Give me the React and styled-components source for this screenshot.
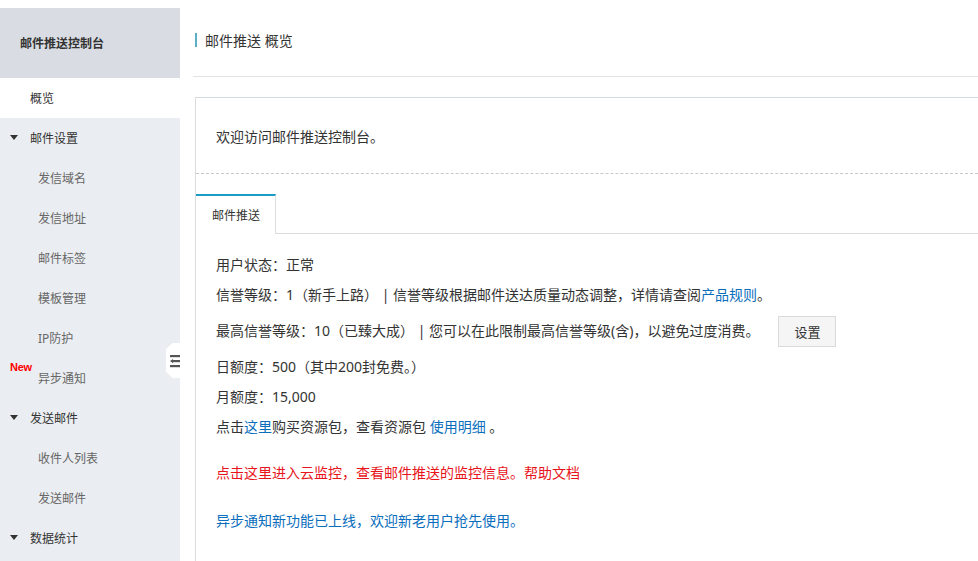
import React from "react";
import styled, { createGlobalStyle } from "styled-components";

const Global = createGlobalStyle`
  html, body { margin: 0; padding: 0; background: #fff; }
  body { font-family: "Noto Sans", "Noto Sans CJK SC", sans-serif; color: #333; overflow: hidden; }
  * { box-sizing: border-box; }
`;

const Page = styled.div`
  display: flex;
  height: 561px;
  padding-top: 8px;
  overflow: hidden;
`;

const Sidebar = styled.aside`
  position: relative;
  width: 180px;
  flex: 0 0 180px;
  background: #eaedf1;
`;

const SideHeader = styled.div`
  height: 70px;
  background: #d9dde3;
  display: flex;
  align-items: center;
  padding-left: 20px;
  font-size: 12px;
  font-weight: 700;
  color: #333;
`;

const Item = styled.div`
  position: relative;
  height: 40px;
  display: flex;
  align-items: center;
  padding-left: ${(p) => (p.$sub ? 38 : 30)}px;
  font-size: 12px;
  color: ${(p) => (p.$sub ? "#666" : "#333")};
  background: ${(p) => (p.$active ? "#fff" : "transparent")};
`;

const Caret = styled.span`
  position: absolute;
  left: 10px;
  top: 17px;
  width: 0;
  height: 0;
  border-left: 4px solid transparent;
  border-right: 4px solid transparent;
  border-top: 5px solid #333;
`;

const NewTag = styled.span`
  position: absolute;
  left: 10px;
  top: 3px;
  font-family: "Liberation Sans Narrow", "Liberation Sans", sans-serif;
  font-size: 11px;
  font-weight: 700;
  color: #f00;
  letter-spacing: -0.3px;
`;

const Collapse = styled.div`
  position: absolute;
  right: 0;
  top: 335px;
  width: 14px;
  height: 35px;
  background: #fff;
  clip-path: polygon(45% 0, 100% 0, 100% 100%, 45% 100%, 0 82%, 0 18%);
  display: flex;
  align-items: center;
  justify-content: flex-end;
`;

const Main = styled.main`
  flex: 1;
  min-width: 0;
`;

const Breadcrumb = styled.div`
  height: 69px;
  margin-left: 13px;
  padding: 25px 0 0 2px;
  border-bottom: 1px solid #e3e3e3;
`;

const Crumb = styled.div`
  display: flex;
  align-items: center;
  height: 14px;
  border-left: 2px solid #5bb0c8;
  padding-left: 8px;
  font-size: 14px;
  color: #333;
`;

const Card = styled.section`
  margin: 20px 0 0 15px;
  border-top: 1px solid #d4dae0;
  border-left: 1px solid #dcdcdc;
  min-height: 600px;
`;

const Welcome = styled.div`
  height: 76px;
  display: flex;
  align-items: center;
  padding-left: 20px;
  font-size: 14px;
  color: #333;
  border-bottom: 1px dashed #c8c8c8;
`;

const TabBar = styled.div`
  display: flex;
  margin-top: 20px;
  border-bottom: 1px solid #dddddd;
`;

const Tab = styled.div`
  width: 80px;
  height: 40px;
  margin-bottom: -1px;
  background: #fff;
  border-top: 2px solid #1a9cc4;
  border-right: 1px solid #dddddd;
  display: flex;
  align-items: center;
  padding-left: 16px;
  font-size: 12px;
  color: #333;
`;

const Info = styled.div`
  padding: 15px 0 0 20px;
  display: flex;
  flex-direction: column;
  font-size: 14px;
  color: #333;
`;

const Line = styled.div`
  height: ${(p) => p.$h || 30}px;
  margin-top: ${(p) => p.$mt || 0}px;
  display: flex;
  align-items: center;
  white-space: pre;
  color: ${(p) => p.$color || "#333"};
`;

const Link = styled.a`
  color: #0a6ebd;
  text-decoration: none;
  cursor: pointer;
`;

const Button = styled.button`
  margin-left: 19px;
  width: 58px;
  height: 31px;
  background: #f5f5f5;
  border: 1px solid #dadada;
  font-family: inherit;
  font-size: 13px;
  color: #333;
  padding: 0;
  margin-top: 2px;
`;

const CollapseIcon = () => (
  <svg width="10" height="14" viewBox="0 0 10 14">
    <rect x="0" y="1" width="10" height="2.2" fill="#555" />
    <rect x="3" y="6" width="7" height="2.2" fill="#555" />
    <path d="M0 7.1 L3 5 L3 9.2 Z" fill="#555" />
    <rect x="0" y="11" width="10" height="2.2" fill="#555" />
  </svg>
);

const menu = [
  { label: "概览", active: true },
  { label: "邮件设置", group: true },
  { label: "发信域名", sub: true },
  { label: "发信地址", sub: true },
  { label: "邮件标签", sub: true },
  { label: "模板管理", sub: true },
  { label: "IP防护", sub: true },
  { label: "异步通知", sub: true, isNew: true },
  { label: "发送邮件", group: true },
  { label: "收件人列表", sub: true },
  { label: "发送邮件", sub: true },
  { label: "数据统计", group: true },
];

export default function App() {
  return (
    <>
      <Global />
      <Page>
        <Sidebar>
          <SideHeader>邮件推送控制台</SideHeader>
          {menu.map((m, i) => (
            <Item key={i} $sub={m.sub} $active={m.active}>
              {m.group && <Caret />}
              {m.isNew && <NewTag>New</NewTag>}
              {m.label}
            </Item>
          ))}
          <Collapse>
            <CollapseIcon />
          </Collapse>
        </Sidebar>
        <Main>
          <Breadcrumb>
            <Crumb>邮件推送 概览</Crumb>
          </Breadcrumb>
          <Card>
            <Welcome>欢迎访问邮件推送控制台。</Welcome>
            <TabBar>
              <Tab>邮件推送</Tab>
            </TabBar>
            <Info>
              <Line>用户状态：正常</Line>
              <Line>
                {"信誉等级：1（新手上路） | 信誉等级根据邮件送达质量动态调整，详情请查阅"}
                <Link>产品规则</Link>。
              </Line>
              <Line $h={42}>
                {"最高信誉等级：10（已臻大成） | 您可以在此限制最高信誉等级(含)，以避免过度消费。"}
                <Button>设置</Button>
              </Line>
              <Line>日额度：500（其中200封免费。）</Line>
              <Line>月额度：15,000</Line>
              <Line>
                点击<Link>这里</Link>{"购买资源包，查看资源包 "}<Link>使用明细</Link>{" 。"}
              </Line>
              <Line $mt={16} $color="#e8141b">
                点击这里进入云监控，查看邮件推送的监控信息。帮助文档
              </Line>
              <Line $mt={18} $color="#0a6ebd">
                异步通知新功能已上线，欢迎新老用户抢先使用。
              </Line>
            </Info>
          </Card>
        </Main>
      </Page>
    </>
  );
}
